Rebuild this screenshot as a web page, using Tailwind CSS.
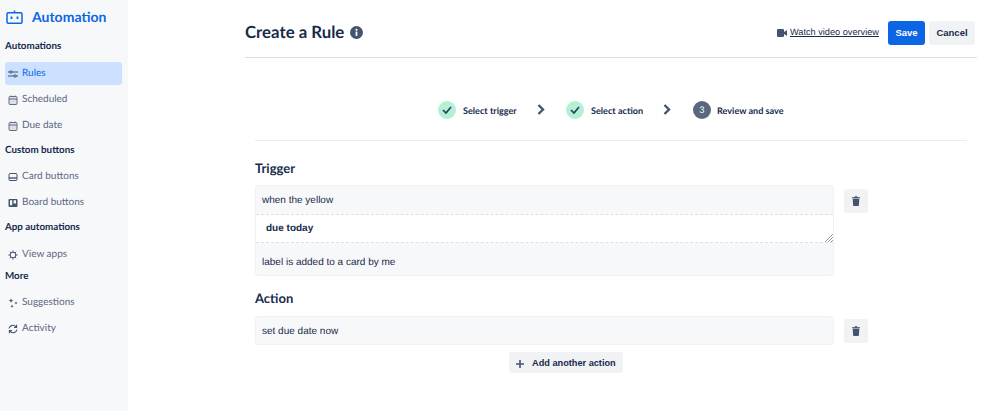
<!DOCTYPE html>
<html lang="en">
<head>
    <meta charset="UTF-8">
    <title>Create a Rule</title>
    <script src="https://cdn.jsdelivr.net/npm/@tailwindcss/browser@4"></script>
</head>
<body class="bg-white overflow-hidden font-['Lato',sans-serif] [text-rendering:geometricPrecision]">
    <div class="flex h-[411px] w-[999px]">
        <!-- Sidebar -->
        <aside class="w-[128px] shrink-0 bg-[#f7f8fa] pl-[5px] pr-[6px]">
            <div class="flex items-center gap-[9px] h-[35px] pl-[1px] pb-[1px]">
                <svg class="w-[17px] h-[15px]" viewBox="0 0 17 15" fill="none" stroke="#0c66e4" stroke-width="1.5"><rect x="1" y="2.8" width="15" height="10.5" rx="1.2"/><path d="M8.5 2.8V.5"/><path d="M5.5 6.5v2.5M11.5 6.5v2.5" stroke-width="1.8"/></svg>
                <span class="text-[14px] font-bold text-[#0c66e4] leading-none">Automation</span>
            </div>
            <h3 class="text-[9.8px] font-bold text-[#172b4d] leading-[22px]">Automations</h3>
            <nav class="mt-[5px]">
                <a class="flex items-center gap-[4px] h-[23px] pl-[3px] rounded-[3px] bg-[#cce0ff] text-[10px] text-[#0c66e4]">
                    <svg class="w-[10px] h-[10px]" viewBox="0 0 10 10" fill="none" stroke="#44546f" stroke-width="1"><path d="M0 3h10M0 7h10"/><circle cx="3" cy="3" r="1.2" fill="#cce0ff"/><circle cx="7" cy="7" r="1.2" fill="#cce0ff"/></svg>
                    Rules
                </a>
                <a class="flex items-center gap-[4px] h-[23px] mt-[3px] pl-[3px] text-[10px] text-[#596780]">
                    <svg class="w-[10px] h-[10px]" viewBox="0 0 10 10" fill="#dcdfe4" stroke="#626f86" stroke-width="1"><rect x="1" y="1.5" width="8" height="8" rx="1"/><path d="M1 4h8M3 .5v1.5M7 .5v1.5"/></svg>
                    Scheduled
                </a>
                <a class="flex items-center gap-[4px] h-[23px] mt-[3px] pl-[3px] text-[10px] text-[#596780]">
                    <svg class="w-[10px] h-[10px]" viewBox="0 0 10 10" fill="#dcdfe4" stroke="#626f86" stroke-width="1"><rect x="1" y="1.5" width="8" height="8" rx="1"/><path d="M1 4h8M3 .5v1.5M7 .5v1.5"/></svg>
                    Due date
                </a>
            </nav>
            <h3 class="text-[9.8px] font-bold text-[#172b4d] leading-[22px] mt-[2px]">Custom buttons</h3>
            <nav class="mt-[4px]">
                <a class="flex items-center gap-[4px] h-[23px] pl-[3px] text-[10px] text-[#596780]">
                    <svg class="w-[10px] h-[10px]" viewBox="0 0 10 10" fill="none" stroke="#44546f" stroke-width="1"><rect x="1" y="1.5" width="8" height="7" rx="1"/><path d="M1 6h8" stroke-width="1.4"/></svg>
                    Card buttons
                </a>
                <a class="flex items-center gap-[4px] h-[23px] mt-[3px] pl-[3px] text-[10px] text-[#596780]">
                    <svg class="w-[10px] h-[10px]" viewBox="0 0 10 10" fill="#44546f"><path d="M1.5 1h7a1 1 0 0 1 1 1v6a1 1 0 0 1-1 1h-7a1 1 0 0 1-1-1V2a1 1 0 0 1 1-1z"/><path fill="#f7f8fa" d="M2 2.2h2.2v5H2zM5.6 2.2H8v3.4H5.6z"/></svg>
                    Board buttons
                </a>
            </nav>
            <h3 class="text-[9.8px] font-bold text-[#172b4d] leading-[22px] mt-[2px]">App automations</h3>
            <nav class="mt-[5px]">
                <a class="flex items-center gap-[4px] h-[23px] pl-[3px] text-[10px] text-[#596780]">
                    <svg class="w-[10px] h-[10px]" viewBox="0 0 10 10" fill="none" stroke="#44546f"><circle cx="5" cy="5" r="2.8"/><path d="M5 .4v1.8M5 7.8v1.8M.4 5h1.8M7.8 5h1.8M1.8 1.8l1.2 1.2M7 7l1.2 1.2M1.8 8.2L3 7M7 3l1.2-1.2" stroke-width="1"/></svg>
                    View apps
                </a>
            </nav>
            <h3 class="text-[9.8px] font-bold text-[#172b4d] leading-[20px]">More</h3>
            <nav class="mt-[5px]">
                <a class="flex items-center gap-[4px] h-[23px] pl-[3px] text-[10px] text-[#596780]">
                    <svg class="w-[10px] h-[10px]" viewBox="0 0 10 10" fill="#44546f"><path d="M3 0.2l.7 1.7 1.7.7-1.7.7L3 5l-.7-1.7L.6 2.6l1.7-.7zM8 3.6l.5 1 1.2.5-1.2.5-.5 1-.5-1-1.2-.5 1.2-.5zM4 6.6l.5 1.2 1.2.5-1.2.5L4 10l-.5-1.2-1.2-.5 1.2-.5z"/></svg>
                    Suggestions
                </a>
                <a class="flex items-center gap-[4px] h-[23px] mt-[3px] pl-[3px] text-[10px] text-[#596780]">
                    <svg class="w-[10px] h-[10px]" viewBox="0 0 10 10" fill="none" stroke="#44546f" stroke-width="1.1"><path d="M1 4.5A4 4 0 0 1 8.2 3M9 5.5A4 4 0 0 1 1.8 7"/><path d="M8.6 0.8v2.6H6M1.4 9.2V6.6H4"/></svg>
                    Activity
                </a>
            </nav>
        </aside>

        <!-- Main -->
        <main class="flex-1 pl-[117px] pr-[22px]">
            <header class="flex items-center justify-between h-[58px] border-b border-[#dcdfe4] pt-[8px] pr-[2px]">
                <div class="flex items-center gap-[6px]">
                    <h1 class="text-[16.8px] font-bold text-[#172b4d] leading-none">Create a Rule</h1>
                    <svg class="w-[13px] h-[13px]" viewBox="0 0 13 13"><circle cx="6.5" cy="6.5" r="6.5" fill="#44546f"/><rect x="5.6" y="5.6" width="1.8" height="4.2" fill="#fff"/><circle cx="6.5" cy="3.8" r="1.1" fill="#fff"/></svg>
                </div>
                <div class="flex items-center font-['Liberation_Sans',sans-serif] text-[#172b4d]">
                    <svg class="w-[10px] h-[8px] mr-[3px]" viewBox="0 0 10 8" fill="#44546f"><rect width="7" height="8" rx="1"/><path d="M7 3l3-2v6L7 5z"/></svg>
                    <a class="text-[9.2px] underline mr-[9px] mt-[1px]">Watch video overview</a>
                    <button class="w-[37px] h-[24px] pt-[1px] rounded-[3px] bg-[#0c66e4] text-white text-[9.5px] font-bold">Save</button>
                    <button class="w-[46px] h-[24px] pt-[1px] ml-[4px] rounded-[3px] bg-[#f1f2f4] text-[9.5px] font-bold">Cancel</button>
                </div>
            </header>

            <section class="ml-[10px] mr-[10px]">
                <!-- Steps -->
                <div class="flex items-center h-[83px] pl-[183px] pt-[21px] border-b border-[#ebecf0] text-[9.1px] font-bold text-[#172b4d]">
                    <span class="flex items-center justify-center w-[18px] h-[18px] rounded-full bg-[#b3f0d4]">
                        <svg class="w-[10px] h-[8px]" viewBox="0 0 10 8" fill="none" stroke="#2c3e5d" stroke-width="1.7"><path d="M1 4l3 3 5-6"/></svg>
                    </span>
                    <span class="ml-[7px] w-[54px] mt-[2px] whitespace-nowrap">Select trigger</span>
                    <svg class="w-[8px] h-[11px] ml-[20px] mr-[21px]" viewBox="0 0 8 11" fill="none" stroke="#44546f" stroke-width="2.4"><path d="M1.5 1l4.5 4.5L1.5 10"/></svg>
                    <span class="flex items-center justify-center w-[18px] h-[18px] rounded-full bg-[#b3f0d4]">
                        <svg class="w-[10px] h-[8px]" viewBox="0 0 10 8" fill="none" stroke="#2c3e5d" stroke-width="1.7"><path d="M1 4l3 3 5-6"/></svg>
                    </span>
                    <span class="ml-[7px] w-[52px] mt-[2px] whitespace-nowrap">Select action</span>
                    <svg class="w-[8px] h-[11px] ml-[20px] mr-[22px]" viewBox="0 0 8 11" fill="none" stroke="#44546f" stroke-width="2.4"><path d="M1.5 1l4.5 4.5L1.5 10"/></svg>
                    <span class="flex items-center justify-center w-[18px] h-[18px] pt-[1px] rounded-full bg-[#5a6781] text-white font-normal">3</span>
                    <span class="ml-[6px] mt-[2px] whitespace-nowrap">Review and save</span>
                </div>

                <h2 class="mt-[17px] text-[13px] font-bold text-[#172b4d] leading-[20px]">Trigger</h2>
                <div class="flex items-start mt-[7px] font-['Liberation_Sans',sans-serif] text-[10px] text-[#172b4d]">
                    <div class="w-[579px] rounded-[3px] border border-[#f1f2f4] bg-[#f7f8f9]">
                        <div class="flex items-center h-[28px] pt-[1px] px-[6px]">when the yellow</div>
                        <div class="relative flex items-center h-[29px] pl-[10px] bg-white border-y border-dashed border-[#dcdfe4] font-bold">
                            due today
                            <svg class="absolute right-0 bottom-0 w-[8px] h-[8px]" viewBox="0 0 8 8" stroke="#888" stroke-width="0.8"><path d="M0 8l8-8M3 8l5-5M6 8l2-2"/></svg>
                        </div>
                        <div class="flex items-center h-[32px] px-[6px] pt-[6px]">label is added to a card by me</div>
                    </div>
                    <button class="flex items-center justify-center w-[24px] h-[24px] ml-[10px] mt-[4px] rounded-[3px] bg-[#f1f2f4]">
                        <svg class="w-[8px] h-[10px]" viewBox="0 0 8 10" fill="#44546f"><path d="M0 1.2h2.4L3 .3h2l.6.9H8v1H0zM.7 2.8h6.6l-.4 6.4a.8.8 0 0 1-.8.8H1.9a.8.8 0 0 1-.8-.8z"/></svg>
                    </button>
                </div>

                <h2 class="mt-[12px] text-[13px] font-bold text-[#172b4d] leading-[20px]">Action</h2>
                <div class="flex items-start mt-[8px] font-['Liberation_Sans',sans-serif] text-[10px] text-[#172b4d]">
                    <div class="flex items-center w-[579px] h-[29px] px-[6px] pt-[1px] rounded-[3px] border border-[#f1f2f4] bg-[#f7f8f9]">set due date now</div>
                    <button class="flex items-center justify-center w-[24px] h-[24px] ml-[10px] mt-[3px] rounded-[3px] bg-[#f1f2f4]">
                        <svg class="w-[8px] h-[10px]" viewBox="0 0 8 10" fill="#44546f"><path d="M0 1.2h2.4L3 .3h2l.6.9H8v1H0zM.7 2.8h6.6l-.4 6.4a.8.8 0 0 1-.8.8H1.9a.8.8 0 0 1-.8-.8z"/></svg>
                    </button>
                </div>
                <button class="flex items-center h-[21px] w-[114px] mt-[7px] ml-[254px] pl-[7px] pt-[2px] rounded-[3px] bg-[#f1f2f4] font-['Liberation_Sans',sans-serif] text-[9.2px] font-bold text-[#172b4d] whitespace-nowrap">
                    <svg class="w-[8px] h-[8px] mr-[8px]" viewBox="0 0 8 8" fill="#44546f"><path d="M3.2 0h1.6v3.2H8v1.6H4.8V8H3.2V4.8H0V3.2h3.2z"/></svg>
                    Add another action
                </button>
            </section>
        </main>
    </div>
</body>
</html>
